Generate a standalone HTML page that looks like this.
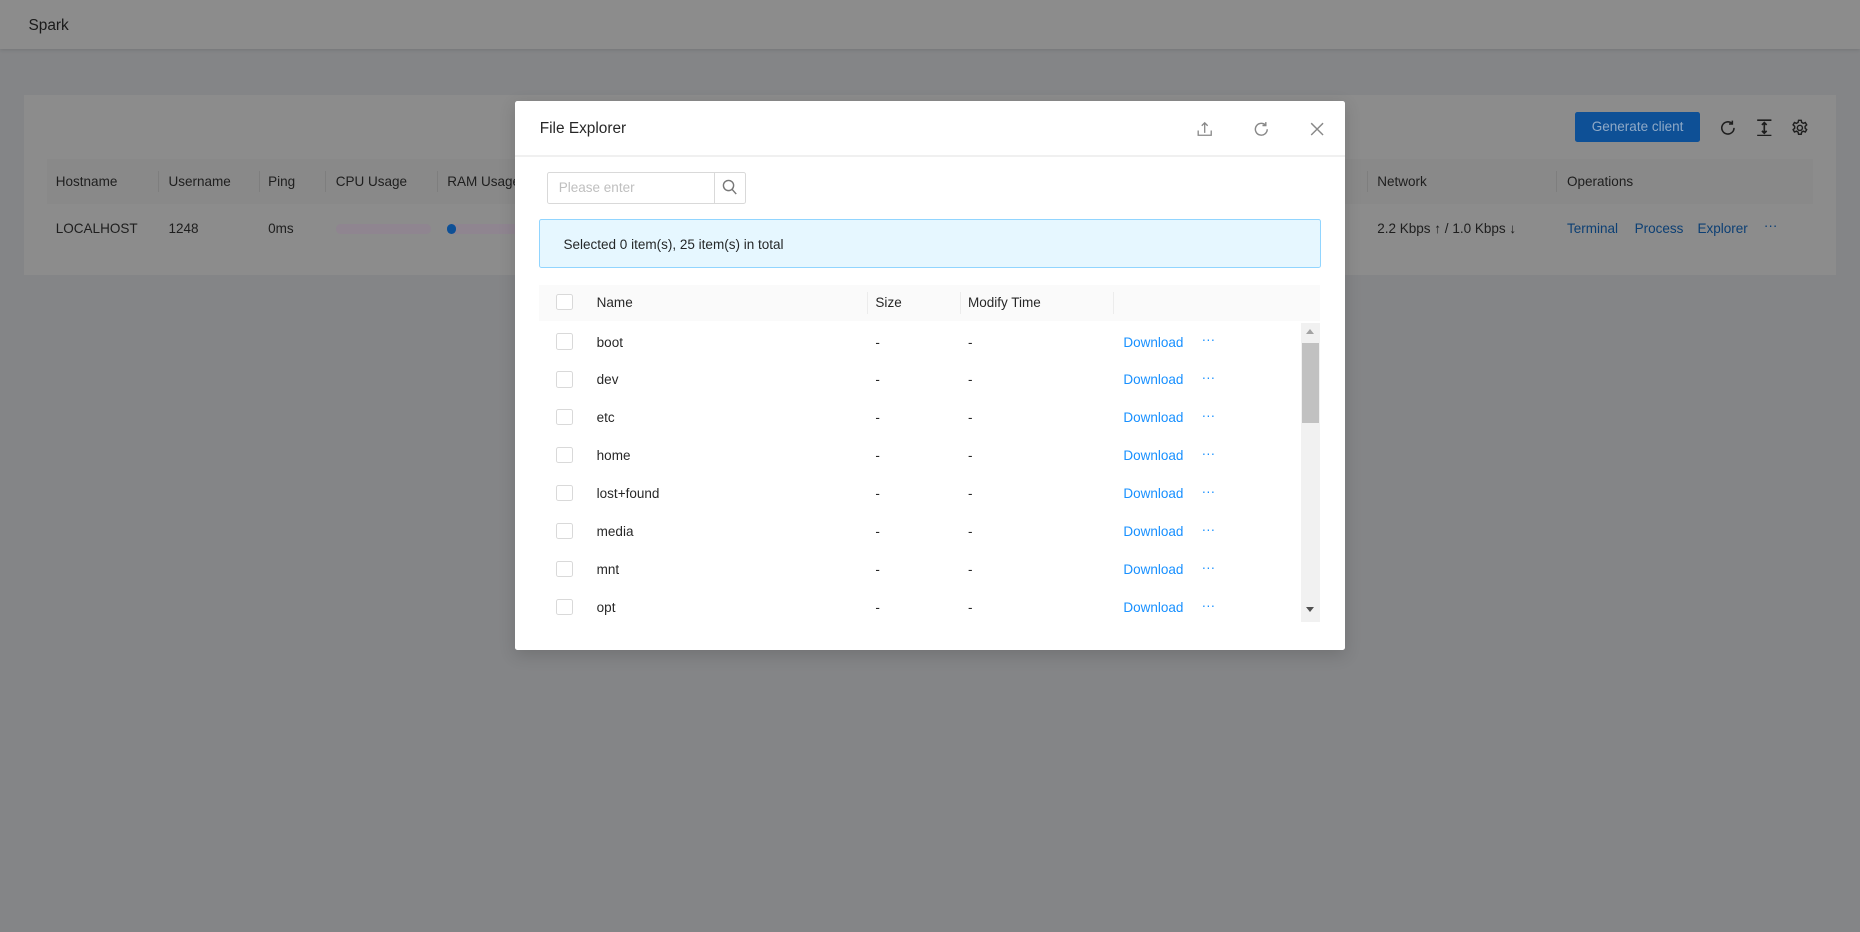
<!DOCTYPE html>
<html><head><meta charset="utf-8"><style>
html,body{margin:0;padding:0;width:1860px;height:932px;overflow:hidden;background:#848587;font-family:"Liberation Sans",sans-serif;}
#w{zoom:1.18622;width:1568px;height:786px;position:relative;font-size:11.4px;color:#1e1e1e;}
.a{position:absolute;white-space:nowrap;}
.t{margin-top:1px}
.hdr{left:0;top:0;width:1568px;height:41px;background:#8c8c8c;box-shadow:0 1px 3px rgba(0,0,0,.12);}
.card{left:20px;top:80px;width:1528px;height:152px;background:#8c8c8c;}
.th{top:134px;left:40px;width:1488px;height:38px;background:#898989;}
.sep{width:1px;height:18px;background:#7e7e7e;}
.lnk{color:#0c3f74;}
.modal{left:434px;top:85px;width:700px;height:463px;background:#fff;border-radius:2px;box-shadow:0 4px 14px rgba(0,0,0,.15);}
.m{color:rgba(0,0,0,.85);}
.cb{width:12px;height:12px;border:1px solid #d9d9d9;border-radius:2px;background:#fff;}
.dl{color:#1890ff;}
</style></head><body><div id="w">
<div class="a hdr"></div>
<div class="a" style="left:24px;top:14px;font-size:13px;color:#1a1a1a">Spark</div>
<div class="a card"></div>
<div class="a" style="left:1328px;top:94px;width:105px;height:26px;background:#0e5096;border-radius:2px;color:#8fa9c6;text-align:center;line-height:26px">Generate client</div>
<svg class="a" style="left:1449px;top:100px" width="15" height="15" viewBox="0 0 16 16" fill="none" stroke="#1e1e1e" stroke-width="1.4"><path d="M13.5 8A5.5 5.5 0 1 1 11.5 3.8"/><path d="M12 1.5v3h-3"/></svg>
<svg class="a" style="left:1480px;top:100px" width="14" height="15" viewBox="0 0 14 15" fill="none" stroke="#1e1e1e" stroke-width="1.4"><path d="M1 1h12M1 14h12M7 3v9M5 5l2-2 2 2M5 10l2 2 2-2"/></svg>
<svg class="a" style="left:1510px;top:100px" width="15" height="15" viewBox="0 0 16 16" fill="none" stroke="#1e1e1e" stroke-width="1.3"><circle cx="8" cy="8" r="2.3"/><path d="M6.8 1.2h2.4l.4 1.9 1.5.8 1.8-.7 1.2 2.1-1.4 1.3v1.7l1.4 1.3-1.2 2.1-1.8-.7-1.5.8-.4 1.9H6.8l-.4-1.9-1.5-.8-1.8.7-1.2-2.1 1.4-1.3V6.6L1.9 5.3l1.2-2.1 1.8.7 1.5-.8z"/></svg>
<div class="a th"></div>
<div class="a sep" style="left:133px;top:144px"></div><div class="a sep" style="left:218px;top:144px"></div><div class="a sep" style="left:274px;top:144px"></div><div class="a sep" style="left:368px;top:144px"></div><div class="a sep" style="left:1152px;top:144px"></div><div class="a sep" style="left:1312px;top:144px"></div>
<div class="a" style="left:47px;top:147px">Hostname</div><div class="a" style="left:142px;top:147px">Username</div><div class="a" style="left:226px;top:147px">Ping</div><div class="a" style="left:283px;top:147px">CPU Usage</div><div class="a" style="left:377px;top:147px">RAM Usage</div><div class="a" style="left:1161px;top:147px">Network</div><div class="a" style="left:1321px;top:147px">Operations</div>
<div class="a" style="left:47px;top:186px">LOCALHOST</div><div class="a" style="left:142px;top:186px">1248</div><div class="a" style="left:226px;top:186px">0ms</div>
<div class="a" style="left:283px;top:189px;width:80px;height:8px;border-radius:4px;background:#8f8590"></div>
<div class="a" style="left:377px;top:189px;width:60px;height:8px;border-radius:4px;background:#8f8590"></div>
<div class="a" style="left:377px;top:189px;width:7px;height:8px;border-radius:4px;background:#0e5096"></div>
<div class="a" style="left:1161px;top:186px">2.2 Kbps ↑ / 1.0 Kbps ↓</div>
<div class="a lnk" style="left:1321px;top:186px">Terminal</div><div class="a lnk" style="left:1378px;top:186px">Process</div><div class="a lnk" style="left:1431px;top:186px">Explorer</div><div class="a lnk" style="left:1487px;top:184px">···</div>

<div class="a modal"></div>
<div class="a m" style="left:455px;top:101px;font-size:13px">File Explorer</div>
<svg class="a" style="left:1009px;top:102px" width="13" height="13" viewBox="0 0 13 13" fill="none" stroke="#888" stroke-width="1.1"><path d="M1 8v4h11V8M6.5 10V1.5M4 4l2.5-2.5L9 4"/></svg>
<svg class="a" style="left:1056px;top:102px" width="14" height="14" viewBox="0 0 14 14" fill="none" stroke="#888" stroke-width="1.2"><path d="M12 7A5 5 0 1 1 10.3 3.2"/><path d="M10.8 1v2.8H8"/></svg>
<svg class="a" style="left:1104px;top:103px" width="12" height="12" viewBox="0 0 12 12" stroke="#888" stroke-width="1.2"><path d="M1 1l10 10M11 1L1 11"/></svg>
<div class="a" style="left:434px;top:131px;width:700px;height:1px;background:#f0f0f0"></div>
<div class="a" style="left:461px;top:145px;width:166px;height:25px;border:1px solid #d9d9d9;border-radius:2px"></div>
<div class="a" style="left:602px;top:145px;width:1px;height:27px;background:#d9d9d9"></div>
<div class="a" style="left:471px;top:152px;color:#bfbfbf">Please enter</div>
<svg class="a" style="left:609px;top:151px" width="13" height="14" viewBox="0 0 13 14" fill="none" stroke="#777" stroke-width="1.2"><circle cx="5.5" cy="5.5" r="4.3"/><path d="M8.6 8.8l3.4 3.9"/></svg>
<div class="a" style="left:454px;top:185px;width:658px;height:39px;background:#e6f7ff;border:1px solid #91d5ff;border-radius:2px"></div>
<div class="a m" style="left:475px;top:200px">Selected 0 item(s), 25 item(s) in total</div>
<div class="a" style="left:454px;top:240px;width:659px;height:31px;background:#fafafa"></div>
<div class="a cb" style="left:469px;top:248px"></div>
<div class="a" style="left:731px;top:246px;width:1px;height:19px;background:#ececec"></div><div class="a" style="left:809px;top:246px;width:1px;height:19px;background:#ececec"></div><div class="a" style="left:938px;top:246px;width:1px;height:19px;background:#ececec"></div>
<div class="a m" style="left:503px;top:249px">Name</div><div class="a m" style="left:738px;top:249px">Size</div><div class="a m" style="left:816px;top:249px">Modify Time</div>
<div class="a" style="left:1097px;top:272px;width:16px;height:252px;background:#f1f1f1"></div>
<div class="a" style="left:1098px;top:289px;width:14px;height:68px;background:#c1c1c1"></div>
<div class="a" style="left:1101px;top:277px;width:0;height:0;border-left:4px solid transparent;border-right:4px solid transparent;border-bottom:5px solid #a3a3a3"></div>
<div class="a" style="left:1101px;top:512px;width:0;height:0;border-left:4px solid transparent;border-right:4px solid transparent;border-top:5px solid #505050"></div>
<div id="rows"></div>
<script>
var n=["boot","dev","etc","home","lost+found","media","mnt","opt"],h="";
n.forEach(function(s,i){var y=272+i*32;
h+='<div class="a cb" style="left:469px;top:'+(y+9)+'px"></div>'+
'<div class="a m" style="left:503px;top:'+(y+10)+'px">'+s+'</div>'+
'<div class="a m" style="left:738px;top:'+(y+10)+'px">-</div>'+
'<div class="a m" style="left:816px;top:'+(y+10)+'px">-</div>'+
'<div class="a dl" style="left:947px;top:'+(y+10)+'px">Download</div>'+
'<div class="a dl" style="left:1013px;top:'+(y+8)+'px">···</div>';});
document.getElementById("rows").outerHTML=h;
</script>
</div></body></html>
